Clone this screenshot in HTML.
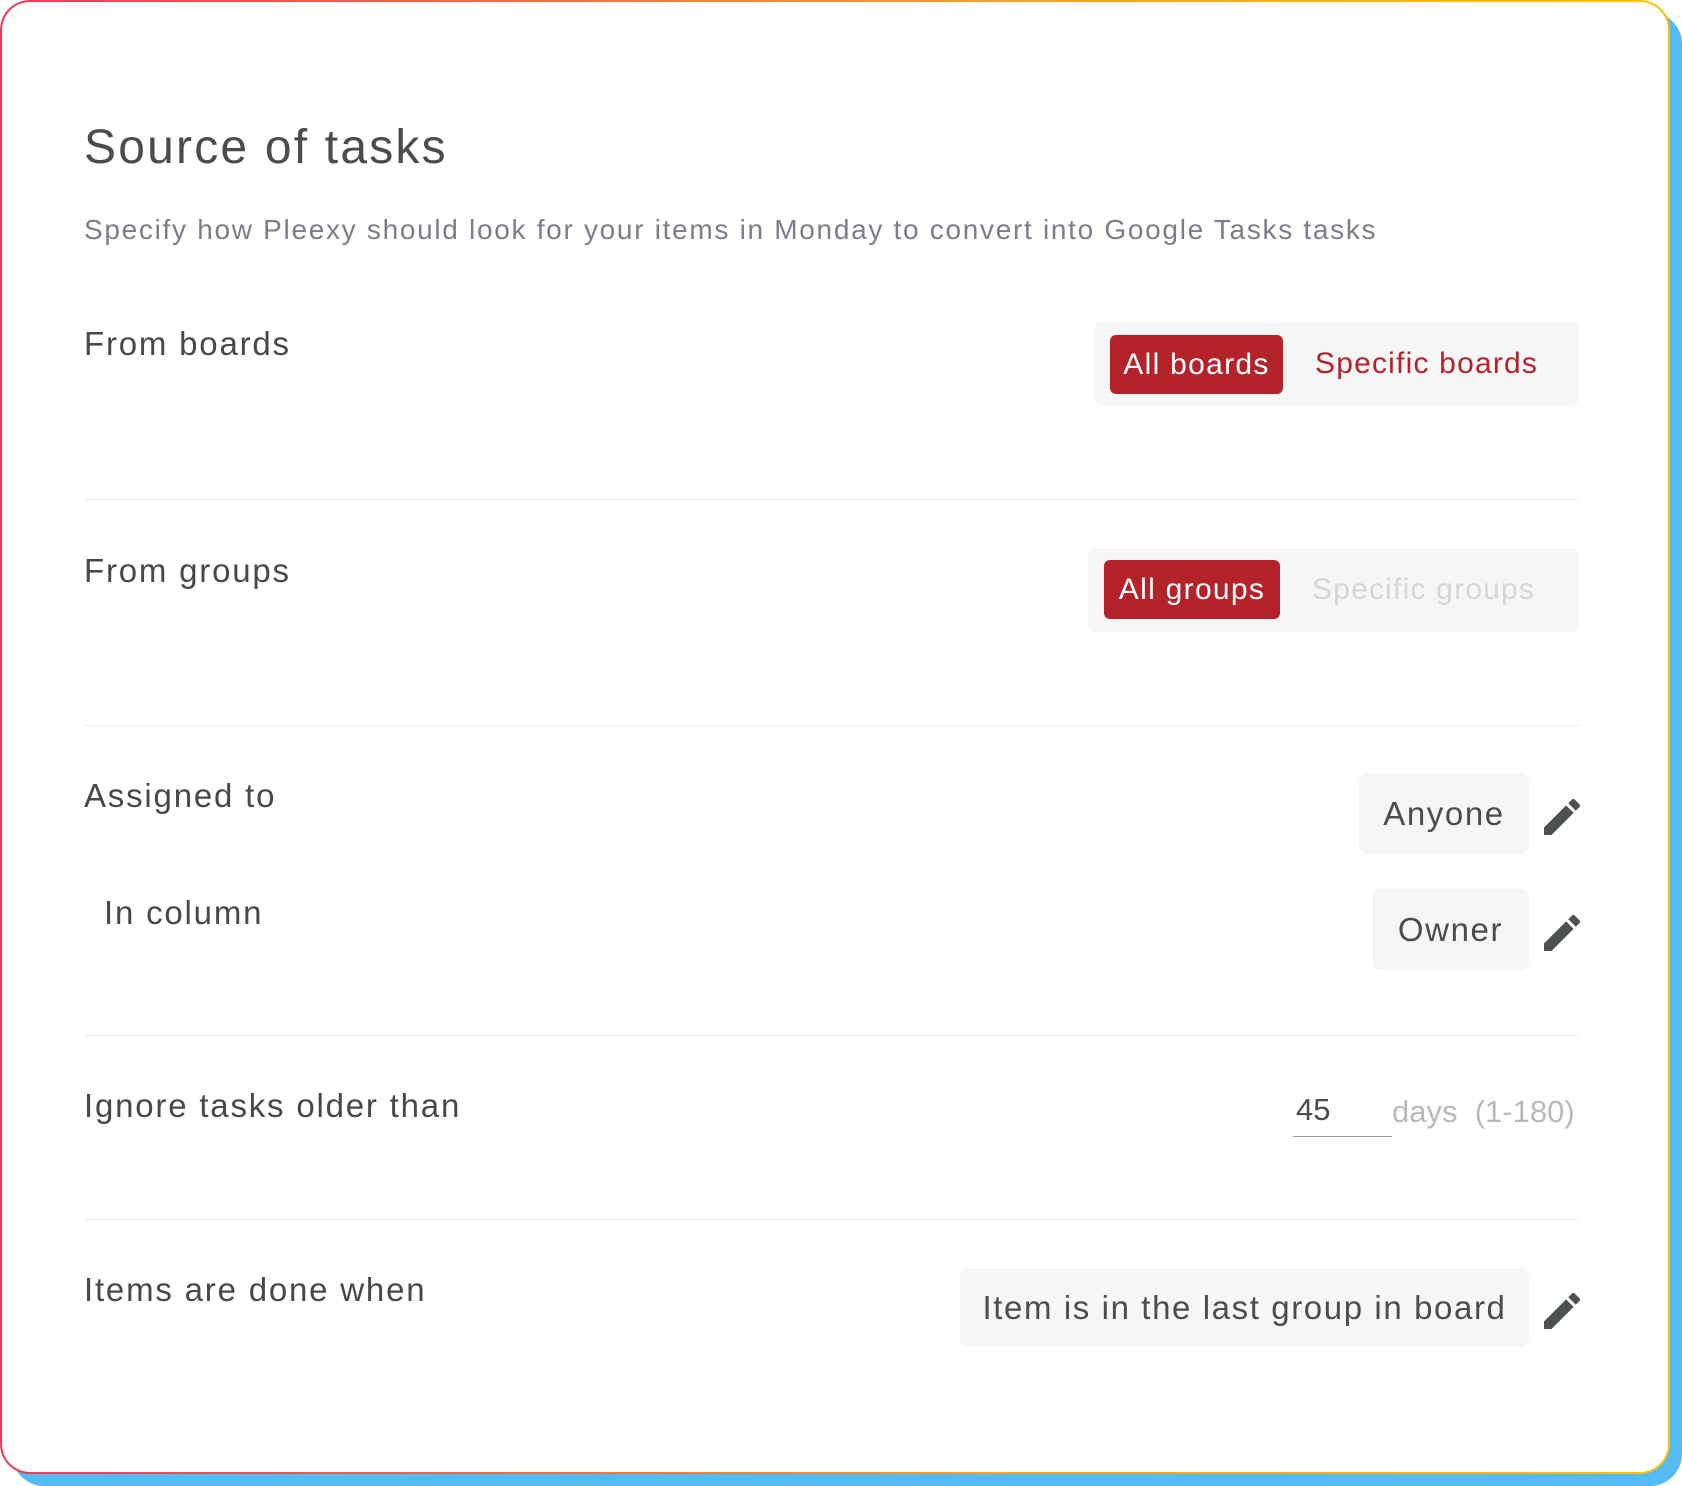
<!DOCTYPE html>
<html><head><meta charset="utf-8"><style>
*{margin:0;padding:0;box-sizing:border-box}
body{width:1682px;height:1486px;background:#fff;position:relative;overflow:hidden;font-family:"Liberation Sans",sans-serif;color:#4a4d4e}
.shadow{position:absolute;left:12px;top:12px;width:1670px;height:1474px;border-radius:32px;background:#55bbf4}
.card{position:absolute;left:0;top:0;width:1670px;height:1474px;border-radius:30px;background:linear-gradient(90deg,#ee3a5a,#f7a02a 60%,#fcc200);padding:2px}
.inner{width:100%;height:100%;background:#fff;border-radius:28px;position:relative}
.a{position:absolute;white-space:nowrap}
.lbl{font-size:33px;letter-spacing:1.8px;color:#46494a;transform:translateY(-50%)}
.hr{position:absolute;left:84px;width:1495px;height:1px;background:#eeeeee}
.tog{position:absolute;background:#f6f6f6;border-radius:8px}
.btn{position:absolute;background:#b4232a;color:#fff;border-radius:6px;font-size:30px;letter-spacing:1.3px;display:flex;align-items:center;justify-content:center}
.box{position:absolute;background:#f6f6f6;border-radius:8px;font-size:33px;letter-spacing:1.6px;color:#4a4d4e;display:flex;align-items:center;justify-content:center}
.pen{position:absolute;width:36px;height:36px}
</style></head><body>
<div class="shadow"></div>
<div class="card"><div class="inner"></div></div>

<div class="a" style="left:84px;top:120px;font-size:48px;letter-spacing:2.2px;color:#4a4d4e">Source of tasks</div>
<div class="a" style="left:84px;top:214px;font-size:28px;color:#7b7d8e;letter-spacing:1.7px">Specify how Pleexy should look for your items in Monday to convert into Google Tasks tasks</div>

<div class="a lbl" style="left:84px;top:344px">From boards</div>
<div class="tog" style="left:1094px;top:322px;width:485px;height:83px"></div>
<div class="btn" style="left:1110px;top:335px;width:173px;height:59px">All boards</div>
<div class="a" style="left:1315px;top:347px;font-size:30px;letter-spacing:1.2px;color:#b4232a">Specific boards</div>
<div class="hr" style="top:499px"></div>

<div class="a lbl" style="left:84px;top:571px">From groups</div>
<div class="tog" style="left:1088px;top:548px;width:491px;height:84px"></div>
<div class="btn" style="left:1104px;top:560px;width:176px;height:59px">All groups</div>
<div class="a" style="left:1312px;top:573px;font-size:30px;letter-spacing:1.2px;color:#d6d6d6">Specific groups</div>
<div class="hr" style="top:725px"></div>

<div class="a lbl" style="left:84px;top:796px">Assigned to</div>
<div class="box" style="left:1359px;top:773px;width:170px;height:81px">Anyone</div>
<svg class="pen" style="left:1544px;top:799px" viewBox="3 3 18 18"><path fill="#4d5152" d="M3 17.25V21h3.75L17.81 9.94l-3.75-3.75L3 17.25zM20.71 7.04a1 1 0 0 0 0-1.41l-2.34-2.34a1 1 0 0 0-1.41 0l-1.83 1.83 3.75 3.75 1.83-1.83z"/></svg>
<div class="a lbl" style="left:104px;top:913px">In column</div>
<div class="box" style="left:1372px;top:889px;width:157px;height:81px">Owner</div>
<svg class="pen" style="left:1544px;top:915px" viewBox="3 3 18 18"><path fill="#4d5152" d="M3 17.25V21h3.75L17.81 9.94l-3.75-3.75L3 17.25zM20.71 7.04a1 1 0 0 0 0-1.41l-2.34-2.34a1 1 0 0 0-1.41 0l-1.83 1.83 3.75 3.75 1.83-1.83z"/></svg>
<div class="hr" style="top:1035px"></div>

<div class="a lbl" style="left:84px;top:1106px">Ignore tasks older than</div>
<div class="a" style="left:1296px;top:1092px;font-size:31px;color:#4a4d4e">45</div>
<div class="a" style="left:1293px;top:1136px;width:99px;height:1px;background:#999"></div>
<div class="a" style="left:1392px;top:1094px;font-size:31px;color:#b9b9b9">days&nbsp;&nbsp;(1-180)</div>
<div class="hr" style="top:1219px"></div>

<div class="a lbl" style="left:84px;top:1290px">Items are done when</div>
<div class="box" style="left:960px;top:1268px;width:569px;height:79px">Item is in the last group in board</div>
<svg class="pen" style="left:1544px;top:1293px" viewBox="3 3 18 18"><path fill="#4d5152" d="M3 17.25V21h3.75L17.81 9.94l-3.75-3.75L3 17.25zM20.71 7.04a1 1 0 0 0 0-1.41l-2.34-2.34a1 1 0 0 0-1.41 0l-1.83 1.83 3.75 3.75 1.83-1.83z"/></svg>
</body></html>
